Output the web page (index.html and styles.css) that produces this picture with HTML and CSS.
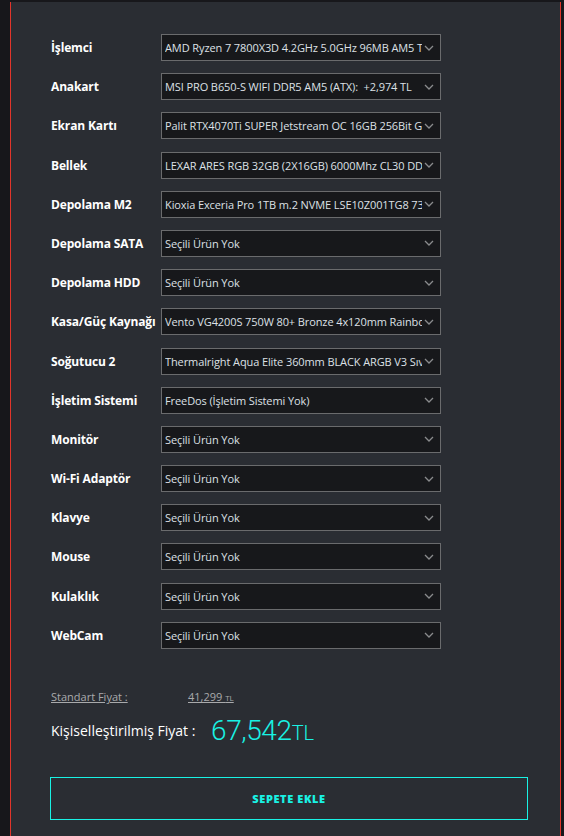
FILE: index.html
```html
<!DOCTYPE html>
<html lang="tr">
<head>
<meta charset="utf-8">
<link rel="stylesheet" href="styles.css">
</head>
<body>
<div class="panel">
  <div class="rows">
    <div class="row"><div class="label">İşlemci</div><div class="sel"><span class="txt">AMD Ryzen 7 7800X3D 4.2GHz 5.0GHz 96MB AM5 Tray</span><svg class="chev" viewBox="0 0 10 6"><path d="M1 1l4 4 4-4"/></svg></div></div>
    <div class="row"><div class="label">Anakart</div><div class="sel"><span class="txt">MSI PRO B650-S WIFI DDR5 AM5 (ATX):&nbsp; +2,974 TL</span><svg class="chev" viewBox="0 0 10 6"><path d="M1 1l4 4 4-4"/></svg></div></div>
    <div class="row"><div class="label">Ekran Kartı</div><div class="sel"><span class="txt">Palit RTX4070Ti SUPER Jetstream OC 16GB 256Bit GDDR6X</span><svg class="chev" viewBox="0 0 10 6"><path d="M1 1l4 4 4-4"/></svg></div></div>
    <div class="row"><div class="label">Bellek</div><div class="sel"><span class="txt">LEXAR ARES RGB 32GB (2X16GB) 6000Mhz CL30 DDR5</span><svg class="chev" viewBox="0 0 10 6"><path d="M1 1l4 4 4-4"/></svg></div></div>
    <div class="row"><div class="label">Depolama M2</div><div class="sel"><span class="txt">Kioxia Exceria Pro 1TB m.2 NVME LSE10Z001TG8 7300MB</span><svg class="chev" viewBox="0 0 10 6"><path d="M1 1l4 4 4-4"/></svg></div></div>
    <div class="row"><div class="label">Depolama SATA</div><div class="sel"><span class="txt">Seçili Ürün Yok</span><svg class="chev" viewBox="0 0 10 6"><path d="M1 1l4 4 4-4"/></svg></div></div>
    <div class="row"><div class="label">Depolama HDD</div><div class="sel"><span class="txt">Seçili Ürün Yok</span><svg class="chev" viewBox="0 0 10 6"><path d="M1 1l4 4 4-4"/></svg></div></div>
    <div class="row"><div class="label">Kasa/Güç Kaynağı</div><div class="sel"><span class="txt">Vento VG4200S 750W 80+ Bronze 4x120mm Rainbow Fan</span><svg class="chev" viewBox="0 0 10 6"><path d="M1 1l4 4 4-4"/></svg></div></div>
    <div class="row"><div class="label">Soğutucu 2</div><div class="sel"><span class="txt">Thermalright Aqua Elite 360mm BLACK ARGB V3 Sıvı</span><svg class="chev" viewBox="0 0 10 6"><path d="M1 1l4 4 4-4"/></svg></div></div>
    <div class="row"><div class="label">İşletim Sistemi</div><div class="sel"><span class="txt">FreeDos (İşletim Sistemi Yok)</span><svg class="chev" viewBox="0 0 10 6"><path d="M1 1l4 4 4-4"/></svg></div></div>
    <div class="row"><div class="label">Monitör</div><div class="sel"><span class="txt">Seçili Ürün Yok</span><svg class="chev" viewBox="0 0 10 6"><path d="M1 1l4 4 4-4"/></svg></div></div>
    <div class="row"><div class="label">Wi-Fi Adaptör</div><div class="sel"><span class="txt">Seçili Ürün Yok</span><svg class="chev" viewBox="0 0 10 6"><path d="M1 1l4 4 4-4"/></svg></div></div>
    <div class="row"><div class="label">Klavye</div><div class="sel"><span class="txt">Seçili Ürün Yok</span><svg class="chev" viewBox="0 0 10 6"><path d="M1 1l4 4 4-4"/></svg></div></div>
    <div class="row"><div class="label">Mouse</div><div class="sel"><span class="txt">Seçili Ürün Yok</span><svg class="chev" viewBox="0 0 10 6"><path d="M1 1l4 4 4-4"/></svg></div></div>
    <div class="row"><div class="label">Kulaklık</div><div class="sel"><span class="txt">Seçili Ürün Yok</span><svg class="chev" viewBox="0 0 10 6"><path d="M1 1l4 4 4-4"/></svg></div></div>
    <div class="row"><div class="label">WebCam</div><div class="sel"><span class="txt">Seçili Ürün Yok</span><svg class="chev" viewBox="0 0 10 6"><path d="M1 1l4 4 4-4"/></svg></div></div>
  </div>
  <div class="prices">
    <div class="std"><span class="std-label">Standart Fiyat :</span><span class="std-val">41,299 <small>TL</small></span></div>
    <div class="custom"><span class="custom-label">Kişiselleştirilmiş Fiyat :</span><span class="custom-val">67,542<span class="tl">TL</span></span></div>
  </div>
  <div class="btn">SEPETE EKLE</div>
</div>
</body>
</html>
```

FILE: styles.css
```css
html, body {
  margin: 0;
  padding: 0;
  background: #17171b;
  height: 100%;
}
body {
  font-family: "Open Sans", "Liberation Sans", sans-serif;
  padding-top: 2px;
  box-sizing: border-box;
}
.panel {
  margin-left: 10px;
  width: 551px;
  min-height: 834px;
  box-sizing: border-box;
  background: #2a2d33;
  border-left: 1px solid #e0352b;
  border-right: 1px solid #e0352b;
  padding: 32px 0 0 40px;
}
.rows {
  display: flex;
  flex-direction: column;
  gap: 12.2px;
}
.row {
  display: flex;
  align-items: center;
  height: 27px;
}
.label {
  width: 110px;
  color: #ffffff;
  font-weight: 700;
  font-size: 12px;
  white-space: nowrap;
  letter-spacing: -0.15px;
}
.sel {
  width: 280px;
  height: 27px;
  box-sizing: border-box;
  border: 1px solid #6a6b6d;
  background: #17181b;
  display: flex;
  align-items: center;
  padding: 0 6px 0 3px;
}
.txt {
  flex: 1;
  min-width: 0;
  overflow: hidden;
  white-space: nowrap;
  color: #dde0e6;
  font-size: 11px;
  letter-spacing: -0.1px;
}
.chev {
  width: 10px;
  height: 6px;
  margin-left: 2px;
  flex: none;
}
.chev path {
  fill: none;
  stroke: #8a8b8d;
  stroke-width: 1.3;
}
.prices {
  margin-top: 40px;
  display: flex;
  flex-direction: column;
}
.std {
  display: flex;
  font-size: 11px;
  color: #a9aaac;
  height: 16px;
  align-items: center;
}
.std-label {
  width: 137px;
  text-decoration: underline;
  text-decoration-color: #a9aaac;
}
.std-val {
  text-decoration: underline;
}
.std-val small {
  font-size: 8px;
}
.custom {
  display: flex;
  align-items: center;
  margin-top: 8px;
  height: 36px;
}
.custom-label {
  color: #ffffff;
  font-size: 14px;
  width: 160px;
}
.custom-val {
  color: #19f2e4;
  font-size: 28px;
  font-weight: 300;
  font-family: Roboto, "Liberation Sans", sans-serif;
  letter-spacing: -0.4px;
}
.custom-val .tl {
  font-size: 20px;
  letter-spacing: 0;
}
.btn {
  margin-top: 28px;
  margin-left: -1px;
  width: 478px;
  height: 43px;
  box-sizing: border-box;
  border: 1px solid #19f2e4;
  display: flex;
  align-items: center;
  justify-content: center;
  color: #19f2e4;
  font-weight: 800;
  font-size: 11px;
  letter-spacing: 0.6px;
}
```
